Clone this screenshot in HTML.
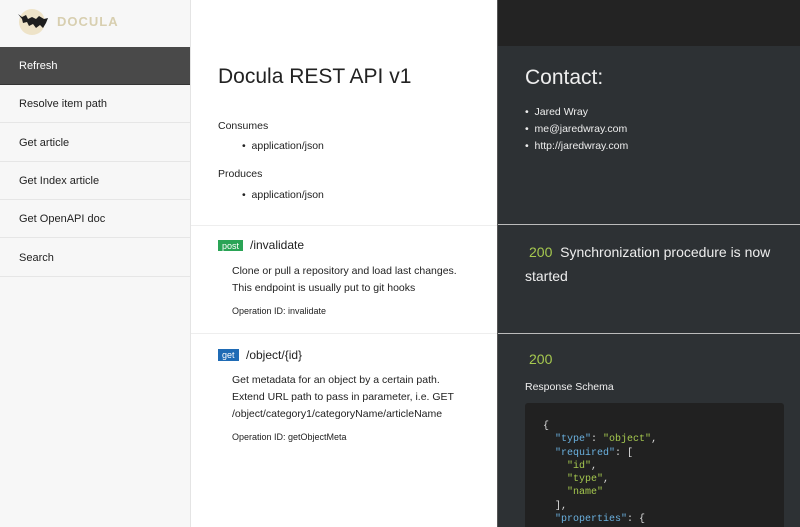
<!DOCTYPE html>
<html><head><style>
*{margin:0;padding:0;box-sizing:border-box}
body{width:800px;height:527px;overflow:hidden;font-family:"Liberation Sans",sans-serif;background:#fff;position:relative;color:#222}
.a{position:absolute;white-space:nowrap}
#side{position:absolute;left:0;top:0;width:191px;height:527px;background:#f7f7f7;border-right:1px solid #e4e4e4}
.nav{position:absolute;left:0;width:190px;height:38px;border-bottom:1px solid #e6e6e6;font-size:11px;padding:13px 0 0 19px;color:#222}
#right{position:absolute;left:497px;top:0;width:303px;height:527px;background:#2d3134;border-left:1px solid #555;overflow:hidden}
.code{color:#ddd}
.k{color:#6ab0de}.s{color:#a6c94f}
</style></head><body>
<div id="side">
 <svg class="a" style="left:17px;top:8px" width="34" height="28" viewBox="0 0 34 28"><circle cx="15" cy="14" r="13" fill="#eee3c8"/><path d="M1 6 L5 9 L9 7 L11 11 L15 9 L19 11 L22 8 L27 11 L31 10 L29 15 L26 20 L23 17 L19 20 L16 16 L12 18 L10 14 L6 15 L5 11 Z" fill="#1e1e1e"/></svg>
 <div class="a" style="left:57px;top:14px;font-size:13px;font-weight:bold;color:#d8cfb0;letter-spacing:1px">DOCULA</div>
 <div class="nav" style="top:47px;background:#494949;color:#fff;border-bottom:1px solid #333;padding-top:13px">Refresh</div>
 <div class="nav" style="top:85px">Resolve item path</div>
 <div class="nav" style="top:124px">Get article</div>
 <div class="nav" style="top:162px">Get Index article</div>
 <div class="nav" style="top:200px">Get OpenAPI doc</div>
 <div class="nav" style="top:239px">Search</div>
</div>

<div class="a" style="left:218px;top:65px;font-size:21px;color:#222">Docula REST API v1</div>
<div class="a" style="left:218px;top:120px;font-size:10.5px">Consumes</div>
<div class="a" style="left:242px;top:140px;font-size:10.5px">•&nbsp;&nbsp;application/json</div>
<div class="a" style="left:218px;top:168px;font-size:10.5px">Produces</div>
<div class="a" style="left:242px;top:189px;font-size:10.5px">•&nbsp;&nbsp;application/json</div>
<div class="a" style="left:191px;top:225px;width:306px;border-top:1px solid #eee"></div>
<div class="a" style="left:218px;top:240px;background:#2aa456;color:#fff;font-size:9px;padding:1px 4px;height:11px;line-height:10px">post</div>
<div class="a" style="left:250px;top:238px;font-size:12px">/invalidate</div>
<div class="a" style="left:232px;top:263px;font-size:10.5px;line-height:17px">Clone or pull a repository and load last changes.<br>This endpoint is usually put to git hooks</div>
<div class="a" style="left:232px;top:306px;font-size:9px">Operation ID: invalidate</div>
<div class="a" style="left:191px;top:333px;width:306px;border-top:1px solid #eee"></div>
<div class="a" style="left:218px;top:349px;background:#1f6bb5;color:#fff;font-size:9px;padding:1px 4px;height:12px;line-height:11px">get</div>
<div class="a" style="left:246px;top:348px;font-size:12px">/object/{id}</div>
<div class="a" style="left:232px;top:372px;font-size:10.5px;line-height:17px">Get metadata for an object by a certain path.<br>Extend URL path to pass in parameter, i.e. GET<br>/object/category1/categoryName/articleName</div>
<div class="a" style="left:232px;top:432px;font-size:9px">Operation ID: getObjectMeta</div>

<div id="right">
 <div class="a" style="left:0;top:0;width:303px;height:46px;background:#232323"></div>
 <div class="a" style="left:27px;top:66px;font-size:21px;color:#eee">Contact:</div>
 <div class="a" style="left:27px;top:104px;font-size:10.5px;color:#eee;line-height:17px">•&nbsp;&nbsp;Jared Wray<br>•&nbsp;&nbsp;me@jaredwray.com<br>•&nbsp;&nbsp;http://jaredwray.com</div>
 <div class="a" style="left:0;top:224px;width:303px;border-top:1px solid #bbb"></div>
 <div class="a" style="left:27px;top:240px;font-size:14px;color:#eee;line-height:24px;white-space:normal;width:260px"><span style="color:#a6c94f;margin-left:4px">200</span>&nbsp;&nbsp;Synchronization procedure is now started</div>
 <div class="a" style="left:0;top:333px;width:303px;border-top:1px solid #bbb"></div>
 <div class="a" style="left:31px;top:351px;font-size:14px;color:#a6c94f">200</div>
 <div class="a" style="left:27px;top:381px;font-size:10.5px;color:#eee">Response Schema</div>
 <div class="a" style="left:27px;top:403px;width:259px;height:130px;background:#212121;border-radius:3px"></div>
 <pre class="a code" style="white-space:pre;left:45px;top:420px;font-family:'Liberation Mono',monospace;font-size:10px;line-height:13.3px">{
  <span class="k">"type"</span>: <span class="s">"object"</span>,
  <span class="k">"required"</span>: [
    <span class="s">"id"</span>,
    <span class="s">"type"</span>,
    <span class="s">"name"</span>
  ],
  <span class="k">"properties"</span>: {</pre>
</div>
</body></html>
